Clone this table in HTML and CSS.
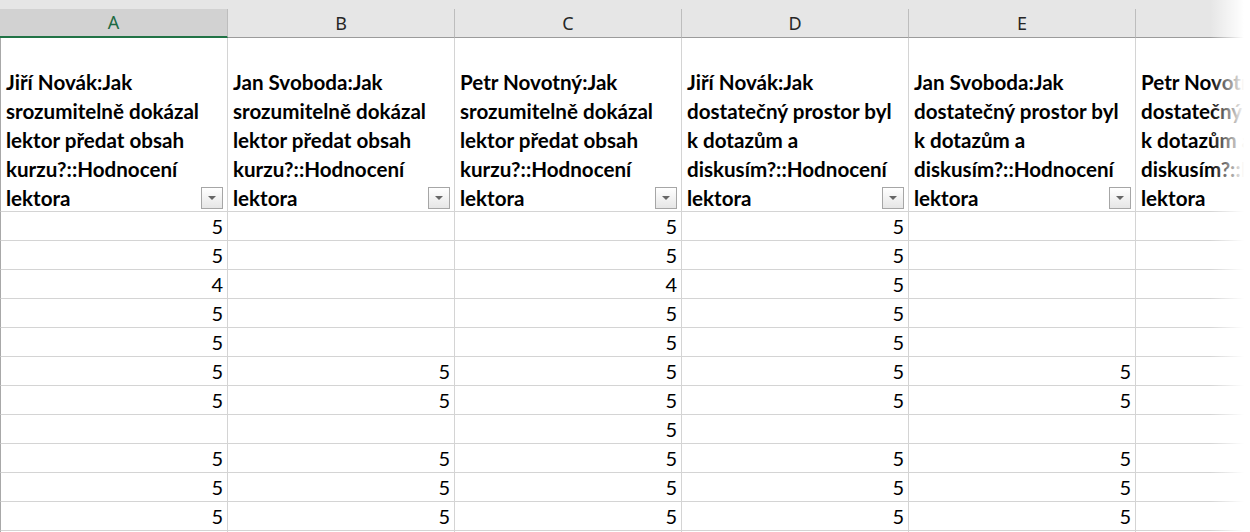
FILE: index.html
```html
<!DOCTYPE html>
<html lang="cs">
<head>
<meta charset="utf-8">
<title>Hodnocení lektora</title>
<link rel="stylesheet" href="styles.css">
</head>
<body>
<div class="sheet">
  <div class="topbar"></div>
  <div class="grid">
    <div class="col-letter selected first">A</div>
    <div class="col-letter">B</div>
    <div class="col-letter">C</div>
    <div class="col-letter">D</div>
    <div class="col-letter">E</div>
    <div class="col-letter">F</div>

    <div class="head first"><span>Jiří Novák:Jak</span><span>srozumitelně dokázal</span><span>lektor předat obsah</span><span>kurzu?::Hodnocení</span><span class="last">lektora<i class="filter"></i></span></div>
    <div class="head"><span>Jan Svoboda:Jak</span><span>srozumitelně dokázal</span><span>lektor předat obsah</span><span>kurzu?::Hodnocení</span><span class="last">lektora<i class="filter"></i></span></div>
    <div class="head"><span>Petr Novotný:Jak</span><span>srozumitelně dokázal</span><span>lektor předat obsah</span><span>kurzu?::Hodnocení</span><span class="last">lektora<i class="filter"></i></span></div>
    <div class="head"><span>Jiří Novák:Jak</span><span>dostatečný prostor byl</span><span>k dotazům a</span><span>diskusím?::Hodnocení</span><span class="last">lektora<i class="filter"></i></span></div>
    <div class="head"><span>Jan Svoboda:Jak</span><span>dostatečný prostor byl</span><span>k dotazům a</span><span>diskusím?::Hodnocení</span><span class="last">lektora<i class="filter"></i></span></div>
    <div class="head"><span>Petr Novotný:Jak</span><span>dostatečný prostor byl</span><span>k dotazům a</span><span>diskusím?::Hodnocení</span><span class="last">lektora<i class="filter"></i></span></div>

    <div class="cell first">5</div><div class="cell"></div><div class="cell">5</div><div class="cell">5</div><div class="cell"></div><div class="cell"></div>
    <div class="cell first">5</div><div class="cell"></div><div class="cell">5</div><div class="cell">5</div><div class="cell"></div><div class="cell"></div>
    <div class="cell first">4</div><div class="cell"></div><div class="cell">4</div><div class="cell">5</div><div class="cell"></div><div class="cell"></div>
    <div class="cell first">5</div><div class="cell"></div><div class="cell">5</div><div class="cell">5</div><div class="cell"></div><div class="cell"></div>
    <div class="cell first">5</div><div class="cell"></div><div class="cell">5</div><div class="cell">5</div><div class="cell"></div><div class="cell"></div>
    <div class="cell first">5</div><div class="cell">5</div><div class="cell">5</div><div class="cell">5</div><div class="cell">5</div><div class="cell"></div>
    <div class="cell first">5</div><div class="cell">5</div><div class="cell">5</div><div class="cell">5</div><div class="cell">5</div><div class="cell"></div>
    <div class="cell first"></div><div class="cell"></div><div class="cell">5</div><div class="cell"></div><div class="cell"></div><div class="cell"></div>
    <div class="cell first">5</div><div class="cell">5</div><div class="cell">5</div><div class="cell">5</div><div class="cell">5</div><div class="cell"></div>
    <div class="cell first">5</div><div class="cell">5</div><div class="cell">5</div><div class="cell">5</div><div class="cell">5</div><div class="cell"></div>
    <div class="cell first">5</div><div class="cell">5</div><div class="cell">5</div><div class="cell">5</div><div class="cell">5</div><div class="cell"></div>
    <div class="cell first"></div><div class="cell"></div><div class="cell"></div><div class="cell"></div><div class="cell"></div><div class="cell"></div>
  </div>
  <div class="fade"></div>
</div>
</body>
</html>
```

FILE: styles.css
```css
* { box-sizing: border-box; }

body {
  margin: 0;
  background: #fff;
  overflow: hidden;
  font-family: "Lato", "Noto Sans", sans-serif;
}

.sheet {
  position: relative;
  width: 1250px;
  height: 532px;
  overflow: hidden;
}

.topbar {
  height: 9px;
  background: #e6e6e6;
}

.grid {
  display: grid;
  grid-template-columns: 228px repeat(5, 227px);
  grid-auto-rows: 29px;
  grid-template-rows: 29px 174px;
  width: max-content;
}

.col-letter {
  background: #e6e6e6;
  border-right: 1px solid #bdbdbd;
  border-bottom: 1px solid #9b9b9b;
  font-family: "Noto Sans", "Open Sans", sans-serif;
  font-size: 18px;
  color: #262626;
  display: flex;
  align-items: center;
  justify-content: center;
  padding-bottom: 1px;
}

.col-letter.selected {
  background: #d2d2d2;
  border-bottom: 2px solid #217346;
  color: #1d6a43;
}

.head {
  border-right: 1px solid #d4d4d4;
  border-bottom: 1px solid #d4d4d4;
  display: flex;
  flex-direction: column;
  justify-content: flex-end;
  padding-left: 5px;
  font-weight: 700;
  font-size: 20.6px;
  line-height: 29px;
  color: #000;
  white-space: nowrap;
}

.head.first,
.cell.first {
  border-left: 1px solid #a8a8a8;
}

.head .last {
  display: flex;
  align-items: center;
  justify-content: space-between;
  padding-right: 4px;
  margin-bottom: -2px;
}

.filter {
  width: 22px;
  height: 22px;
  margin-top: -2px;
  border: 1px solid #a6a6a6;
  background: linear-gradient(#ffffff, #e6e6e6);
  display: flex;
  align-items: center;
  justify-content: center;
}

.filter::after {
  content: "";
  border-left: 4px solid transparent;
  border-right: 4px solid transparent;
  border-top: 4px solid #666;
}

.cell {
  border-right: 1px solid #d4d4d4;
  border-bottom: 1px solid #d4d4d4;
  text-align: right;
  padding-right: 4px;
  font-size: 20px;
  line-height: 28px;
  color: #000;
}

.fade {
  position: absolute;
  top: 0;
  right: 0;
  width: 40px;
  height: 100%;
  background: linear-gradient(to right, rgba(255, 255, 255, 0), #fff 85%);
}
```
